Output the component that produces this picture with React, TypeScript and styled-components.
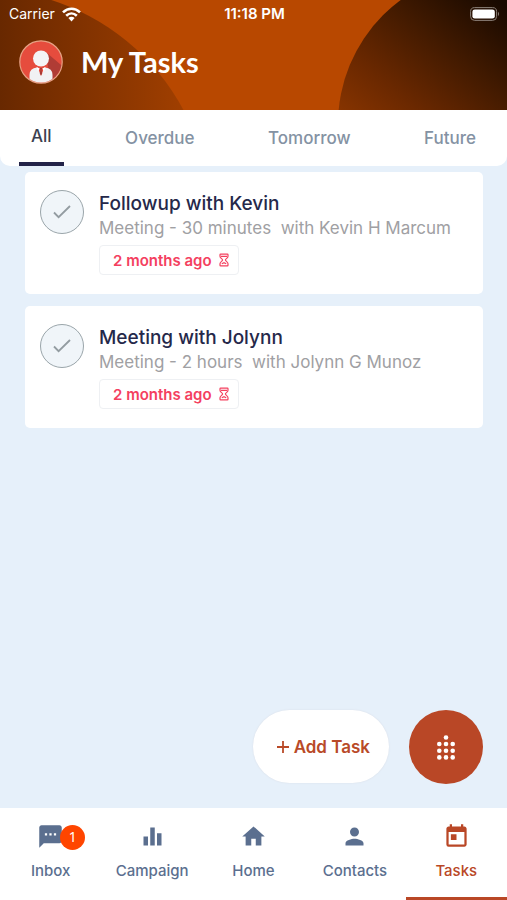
import React from "react";
import styled, { createGlobalStyle } from "styled-components";
import { MdSms, MdEqualizer, MdHome, MdPerson, MdToday } from "react-icons/md";

const GlobalStyle = createGlobalStyle`
  *, *::before, *::after { box-sizing: border-box; }
  body { margin: 0; background: #e6f0fa; }
  button { font: inherit; margin: 0; padding: 0; border: 0; background: none; cursor: pointer; }
  h1, h2, p, ul { margin: 0; padding: 0; }
  ul { list-style: none; }
`;

const Screen = styled.div`
  display: flex;
  flex-direction: column;
  min-height: 100vh;
  background: #e6f0fa;
  font-family: Inter, "Liberation Sans", sans-serif;
`;

const Header = styled.header`
  position: relative;
  isolation: isolate;
  overflow: hidden;
  padding-bottom: 26px;
  background: #b84800;
  color: #fff;
`;

const LeftOrb = styled.div`
  position: absolute;
  z-index: -1;
  left: -249px;
  top: -11px;
  width: 460px;
  height: 460px;
  border-radius: 50%;
  background: linear-gradient(90deg, #682800 249px, #a84200 460px);
`;

const RightOrb = styled.div`
  position: absolute;
  z-index: -1;
  right: -139px;
  top: -30px;
  width: 308px;
  height: 308px;
  border-radius: 50%;
  background: linear-gradient(39deg, #9a3c00 22%, #6a2800 42%, #421a00 57%, #180900 73%);
`;

const StatusBar = styled.div`
  display: grid;
  grid-template-columns: 1fr auto 1fr;
  align-items: center;
  height: 28px;
  padding: 0 7px 0 9px;
  font-size: 14px;
  line-height: 20px;
`;

const Carrier = styled.span`
  display: flex;
  align-items: center;
  gap: 7px;
`;

const Clock = styled.time`
  font-size: 15px;
  font-weight: 600;
`;

const BatteryIcon = styled.svg`
  justify-self: end;
`;

const TitleRow = styled.div`
  display: flex;
  align-items: center;
  gap: 18px;
  padding: 12px 19px 0;
`;

const Title = styled.h1`
  font: 700 29px/36px Lato, sans-serif;
`;

const Tabs = styled.div`
  display: flex;
  justify-content: space-between;
  height: 56px;
  padding: 0 19px;
  border-radius: 0 0 10px 10px;
  background: #fff;
`;

const Tab = styled.button<{ $active?: boolean }>`
  padding: 0 12px;
  border-bottom: ${(p) => (p.$active ? "4px solid #232348" : "0")};
  color: ${(p) => (p.$active ? "#3b3f50" : "#8492a3")};
  font-size: 17px;
  line-height: 20px;
  font-weight: 500;
`;

const TaskList = styled.ul`
  display: flex;
  flex-direction: column;
  gap: 12px;
  padding: 6px 24px 12px 25px;
`;

const TaskCard = styled.li`
  display: flex;
  gap: 15px;
  padding: 18px 15px 19px;
  border-radius: 5px;
  background: #fff;
`;

const CheckButton = styled.button`
  display: grid;
  place-items: center;
  flex: none;
  width: 44px;
  height: 44px;
  border: 1px solid #9aa5aa;
  border-radius: 50%;
  background: #f0f5f9;
`;

const TaskTitle = styled.h2`
  color: #25284a;
  font-size: 19px;
  line-height: 28px;
  font-weight: 500;
`;

const TaskDetail = styled.p`
  color: #a0a0a3;
  font-size: 17px;
  line-height: 20px;
  white-space: pre-wrap;
`;

const DueTag = styled.span`
  display: inline-flex;
  align-items: center;
  gap: 7px;
  height: 30px;
  margin-top: 7px;
  padding: 0 9px 0 13px;
  border: 1px solid #eef0f3;
  border-radius: 4px;
  color: #f4405f;
  font-size: 15px;
  font-weight: 600;
`;

const Actions = styled.div`
  display: flex;
  justify-content: flex-end;
  gap: 20px;
  margin-top: auto;
  padding: 0 24px 24px;
`;

const AddButton = styled.button`
  display: flex;
  align-items: center;
  gap: 4px;
  height: 73px;
  padding: 0 19px 0 23px;
  border-radius: 37px;
  background: #fff;
  box-shadow: 0 0 2px #d9dde6;
  color: #b94a28;
  font-size: 17px;
  font-weight: 600;
`;

const AppsButton = styled.button`
  display: grid;
  place-items: center;
  width: 74px;
  height: 74px;
  border-radius: 50%;
  background: #b94726;
`;

const BottomNav = styled.nav`
  display: grid;
  grid-template-columns: repeat(5, 1fr);
  height: 92px;
  background: #fff;
`;

const NavItem = styled.a<{ $active?: boolean }>`
  display: flex;
  flex-direction: column;
  align-items: center;
  gap: 11px;
  padding-top: 15px;
  border-bottom: 3px solid ${(p) => (p.$active ? "#b94726" : "transparent")};
  color: ${(p) => (p.$active ? "#b94726" : "#5b6f8f")};
  font-size: 15px;
  line-height: 20px;
  font-weight: 500;
  text-decoration: none;
`;

const NavIcon = styled.span`
  position: relative;
  display: flex;
`;

const Badge = styled.span`
  position: absolute;
  left: 23px;
  top: 2px;
  width: 25px;
  height: 25px;
  border-radius: 50%;
  background: #ff4500;
  color: #fff;
  font: 400 14px/24px "Noto Sans", sans-serif;
  text-align: center;
`;

const WifiIcon = () => (
  <svg width="19" height="15" viewBox="0 0 19 15" aria-hidden="true">
    <g fill="none" stroke="#fff" strokeWidth="2.6">
      <path d="M1 5.4C6 .5 13 .5 18 5.4" />
      <path d="M4.2 8.7c3.2-3 7.4-3 10.6 0" />
    </g>
    <path d="M6.4 11c1.8-1.6 4.4-1.6 6.2 0l-3.1 3.4z" fill="#fff" />
  </svg>
);

const Battery = () => (
  <BatteryIcon width="30" height="14" viewBox="0 0 30 14" role="img" aria-label="Battery full">
    <rect x=".6" y=".6" width="26" height="12.8" rx="4" fill="none" stroke="#8b8078" />
    <rect x="2.4" y="2.4" width="22.4" height="9.2" rx="2.4" fill="#fff" />
    <path d="M28 4.8q2 2.2 0 4.4z" fill="#8b8078" />
  </BatteryIcon>
);

const Avatar = () => (
  <svg width="44" height="44" viewBox="0 0 44 44" role="img" aria-label="Profile">
    <defs>
      <clipPath id="avatar-clip">
        <circle cx="22" cy="22" r="20.5" />
      </clipPath>
    </defs>
    <circle cx="22" cy="22" r="21.2" fill="#e64c3d" stroke="#e6a184" strokeWidth="1.2" />
    <g clipPath="url(#avatar-clip)">
      <path d="M28 13l20 17v16H30z" fill="#b03c35" />
      <path d="M10.5 44V35q0-7 7.500-7.500h8q7.500.5 7.500 7.500v9z" fill="#f1f1f3" />
      <path d="M18.500 27h7l-3.500 9z" fill="#e64c3d" />
      <path d="M20.800 28h2.400l-.6 2 .6 3.500-1.200 2-1.200-2 .6-3.500z" fill="#a83a35" />
      <path d="M17.500 27l3.200 1.500-1.700 3zM26.500 27l-3.200 1.500 1.700 3z" fill="#fff" />
      <circle cx="22" cy="18.500" r="8" fill="#f4f4f6" />
    </g>
  </svg>
);

const CheckIcon = () => (
  <svg width="20" height="16" viewBox="0 0 20 16" aria-hidden="true">
    <path d="M2 8.500l4.600 4.700L18 2" fill="none" stroke="#939ca1" strokeWidth="1.800" />
  </svg>
);

const HourglassIcon = () => (
  <svg width="10" height="14" viewBox="0 0 10 14" aria-hidden="true">
    <g fill="none" stroke="#f4405f" strokeWidth="1.200">
      <path d="M1.600 1.200h6.800q.6 0 .6.600v1.400C9 5.300 6.400 5.800 6.400 7S9 8.700 9 10.800v1.400q0 .6-.6.600H1.600q-.6 0-.6-.6v-1.400C1 8.700 3.600 8.200 3.600 7S1 5.300 1 3.200V1.800q0-.6.600-.6z" />
      <path d="M2 3.400h6M2.800 10.800L5 9.600l2.200 1.200" />
    </g>
  </svg>
);

const PlusIcon = () => (
  <svg width="14" height="14" viewBox="0 0 14 14" aria-hidden="true">
    <path d="M7 1v12M1 7h12" stroke="#b94a28" strokeWidth="1.800" />
  </svg>
);

const DotsIcon = () => (
  <svg width="20" height="27" viewBox="0 0 20 27" aria-hidden="true">
    <g fill="#fff">
      <circle cx="10" cy="3.500" r="2.300" />
      {[10, 16.700, 23.400].map((y) =>
        [3.300, 10, 16.700].map((x) => <circle key={`${x}-${y}`} cx={x} cy={y} r="2.300" />)
      )}
    </g>
  </svg>
);

const tabs = ["All", "Overdue", "Tomorrow", "Future"];

const tasks = [
  { title: "Followup with Kevin", detail: "Meeting - 30 minutes  with Kevin H Marcum", due: "2 months ago" },
  { title: "Meeting with Jolynn", detail: "Meeting - 2 hours  with Jolynn G Munoz", due: "2 months ago" },
];

const navItems = [
  { label: "Inbox", Icon: MdSms, count: 1 },
  { label: "Campaign", Icon: MdEqualizer },
  { label: "Home", Icon: MdHome },
  { label: "Contacts", Icon: MdPerson },
  { label: "Tasks", Icon: MdToday, active: true },
];

export default function App() {
  return (
    <Screen>
      <GlobalStyle />
      <Header>
        <LeftOrb />
        <RightOrb />
        <StatusBar>
          <Carrier>
            Carrier <WifiIcon />
          </Carrier>
          <Clock>11:18 PM</Clock>
          <Battery />
        </StatusBar>
        <TitleRow>
          <Avatar />
          <Title>My Tasks</Title>
        </TitleRow>
      </Header>
      <Tabs role="tablist">
        {tabs.map((label, i) => (
          <Tab key={label} role="tab" aria-selected={i === 0} $active={i === 0}>
            {label}
          </Tab>
        ))}
      </Tabs>
      <TaskList>
        {tasks.map((task) => (
          <TaskCard key={task.title}>
            <CheckButton aria-label={`Complete ${task.title}`}>
              <CheckIcon />
            </CheckButton>
            <div>
              <TaskTitle>{task.title}</TaskTitle>
              <TaskDetail>{task.detail}</TaskDetail>
              <DueTag>
                {task.due}
                <HourglassIcon />
              </DueTag>
            </div>
          </TaskCard>
        ))}
      </TaskList>
      <Actions>
        <AddButton>
          <PlusIcon />
          Add Task
        </AddButton>
        <AppsButton aria-label="Open menu">
          <DotsIcon />
        </AppsButton>
      </Actions>
      <BottomNav>
        {navItems.map(({ label, Icon, count, active }) => (
          <NavItem key={label} href="#" $active={active} aria-current={active ? "page" : undefined}>
            <NavIcon>
              <Icon size={27} />
              {count && <Badge>{count}</Badge>}
            </NavIcon>
            {label}
          </NavItem>
        ))}
      </BottomNav>
    </Screen>
  );
}
